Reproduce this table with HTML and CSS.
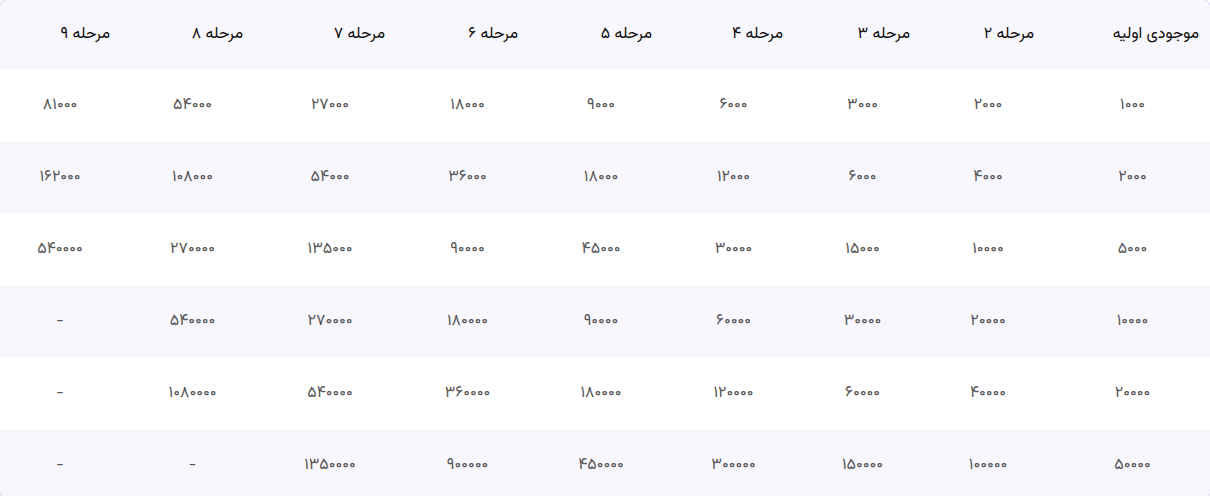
FILE: index.html
```html
<!DOCTYPE html>
<html lang="fa" dir="rtl">
<head>
<meta charset="utf-8">
<link rel="stylesheet" href="styles.css">
</head>
<body>
<div class="frame">
  <table class="grid">
    <colgroup>
      <col class="c1"><col class="c2"><col class="c3"><col class="c4"><col class="c5"><col class="c6"><col class="c7"><col class="c8"><col class="c9">
    </colgroup>
    <thead>
      <tr>
        <th>موجودی اولیه</th><th>مرحله ۲</th><th>مرحله ۳</th><th>مرحله ۴</th><th>مرحله ۵</th><th>مرحله ۶</th><th>مرحله ۷</th><th>مرحله ۸</th><th>مرحله ۹</th>
      </tr>
    </thead>
    <tbody>
      <tr><td>۱۰۰۰</td><td>۲۰۰۰</td><td>۳۰۰۰</td><td>۶۰۰۰</td><td>۹۰۰۰</td><td>۱۸۰۰۰</td><td>۲۷۰۰۰</td><td>۵۴۰۰۰</td><td>۸۱۰۰۰</td></tr>
      <tr><td>۲۰۰۰</td><td>۴۰۰۰</td><td>۶۰۰۰</td><td>۱۲۰۰۰</td><td>۱۸۰۰۰</td><td>۳۶۰۰۰</td><td>۵۴۰۰۰</td><td>۱۰۸۰۰۰</td><td>۱۶۲۰۰۰</td></tr>
      <tr><td>۵۰۰۰</td><td>۱۰۰۰۰</td><td>۱۵۰۰۰</td><td>۳۰۰۰۰</td><td>۴۵۰۰۰</td><td>۹۰۰۰۰</td><td>۱۳۵۰۰۰</td><td>۲۷۰۰۰۰</td><td>۵۴۰۰۰۰</td></tr>
      <tr><td>۱۰۰۰۰</td><td>۲۰۰۰۰</td><td>۳۰۰۰۰</td><td>۶۰۰۰۰</td><td>۹۰۰۰۰</td><td>۱۸۰۰۰۰</td><td>۲۷۰۰۰۰</td><td>۵۴۰۰۰۰</td><td>-</td></tr>
      <tr><td>۲۰۰۰۰</td><td>۴۰۰۰۰</td><td>۶۰۰۰۰</td><td>۱۲۰۰۰۰</td><td>۱۸۰۰۰۰</td><td>۳۶۰۰۰۰</td><td>۵۴۰۰۰۰</td><td>۱۰۸۰۰۰۰</td><td>-</td></tr>
      <tr><td>۵۰۰۰۰</td><td>۱۰۰۰۰۰</td><td>۱۵۰۰۰۰</td><td>۳۰۰۰۰۰</td><td>۴۵۰۰۰۰</td><td>۹۰۰۰۰۰</td><td>۱۳۵۰۰۰۰</td><td>-</td><td>-</td></tr>
    </tbody>
  </table>
</div>
</body>
</html>
```

FILE: styles.css
```css
html, body {
  margin: 0;
  padding: 0;
  background: #ffffff;
}
body {
  font-family: "Vazirmatn", "Noto Sans Arabic", "DejaVu Sans", sans-serif;
  overflow: hidden;
}
.frame {
  margin: -1px;
  height: 498px;
  border: 1px solid #cfc6ec;
  border-radius: 9px;
  overflow: hidden;
}
.grid {
  table-layout: fixed;
  width: 1221px;
  margin-right: -5px;
  border-collapse: collapse;
  border-spacing: 0;
}
.c1 { width: 165px; }
.c2 { width: 124px; }
.c3 { width: 127px; }
.c4 { width: 131px; }
.c5 { width: 134px; }
.c6 { width: 133px; }
.c7 { width: 142px; }
.c8 { width: 133px; }
.c9 { width: 132px; }
.grid th {
  height: 69px;
  padding: 0 16px;
  text-align: right;
  font-weight: 400;
  font-size: 16px;
  color: #0d0d0d;
  background: #f9f7fe;
  white-space: nowrap;
}
.grid td {
  height: 72px;
  padding: 0 16px;
  text-align: center;
  font-size: 16px;
  color: #555555;
  white-space: nowrap;
}
.grid tbody tr:nth-child(even) td {
  background: #f9f7fe;
}
```
